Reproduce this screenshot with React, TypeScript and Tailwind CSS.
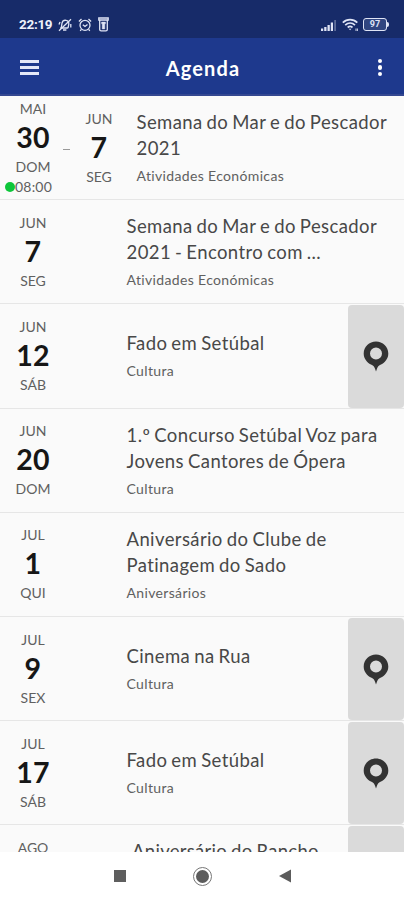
import React, { FC } from "react";

interface EventDate {
  month: string;
  day?: string;
  weekday?: string;
  time?: string;
}

interface AgendaEvent {
  start: EventDate;
  end?: EventDate;
  lines: string[];
  category: string;
  hasLocation?: boolean;
}

const events: AgendaEvent[] = [
  {
    start: { month: "MAI", day: "30", weekday: "DOM", time: "08:00" },
    end: { month: "JUN", day: "7", weekday: "SEG" },
    lines: ["Semana do Mar e do Pescador", "2021"],
    category: "Atividades Económicas",
  },
  {
    start: { month: "JUN", day: "7", weekday: "SEG" },
    lines: ["Semana do Mar e do Pescador", "2021 - Encontro com ..."],
    category: "Atividades Económicas",
  },
  {
    start: { month: "JUN", day: "12", weekday: "SÁB" },
    lines: ["Fado em Setúbal"],
    category: "Cultura",
    hasLocation: true,
  },
  {
    start: { month: "JUN", day: "20", weekday: "DOM" },
    lines: ["1.º Concurso Setúbal Voz para", "Jovens Cantores de Ópera"],
    category: "Cultura",
  },
  {
    start: { month: "JUL", day: "1", weekday: "QUI" },
    lines: ["Aniversário do Clube de", "Patinagem do Sado"],
    category: "Aniversários",
  },
  {
    start: { month: "JUL", day: "9", weekday: "SEX" },
    lines: ["Cinema na Rua"],
    category: "Cultura",
    hasLocation: true,
  },
  {
    start: { month: "JUL", day: "17", weekday: "SÁB" },
    lines: ["Fado em Setúbal"],
    category: "Cultura",
    hasLocation: true,
  },
];

const StatusBar: FC = () => (
  <div className="flex h-[38px] shrink-0 items-center justify-between bg-[#172b69] pt-[11px] pr-[15px] pl-[19px] text-[#dfe4f5]">
    <div className="flex items-center gap-[6px]">
      <span className="w-[33px] font-['Roboto',sans-serif] text-[13.5px] leading-none font-bold tracking-[-0.3px] text-[#eef1fb]">
        22:19
      </span>
      {/* Muted bell */}
      <svg width="14" height="14" viewBox="0 0 14 14" fill="none" stroke="currentColor" strokeWidth="1.3">
        <path d="M2.2 10h7.6M3.3 9.8 4 5.2C4.5 3 6 2 8 2.3s3 1.8 2.8 3.8L10 10.2M5 12h3.4" />
        <path d="M1 12.8 13 1.2M1 6.5 2 4M12.8 6v3.5" />
      </svg>
      {/* Alarm clock */}
      <svg width="14" height="14" viewBox="0 0 14 14" fill="none" stroke="currentColor" strokeWidth="1.3">
        <circle cx="7" cy="7.3" r="5" />
        <path d="M.9 3.4 3.5 1M13.1 3.4 10.5 1M4.8 6.7 7 8.5l2.5-2M3.4 11.3l-1.2 1.6M10.6 11.3l1.2 1.6" />
      </svg>
      {/* Bin */}
      <svg width="11" height="15" viewBox="0 0 11 15" fill="none" stroke="currentColor">
        <path d="M.8 1h9.4v2H.8zM1.7 3v9.4q0 1.4 1.4 1.4h4.8q1.4 0 1.4-1.4V3" strokeWidth="1.3" />
        <path d="M3.5 5h4v1.8h-.7V12H4.2V6.8h-.7z" fill="currentColor" strokeWidth=".4" />
      </svg>
    </div>
    <div className="flex items-center">
      <svg width="16" height="12" viewBox="0 0 16 12" fill="currentColor">
        <path d="M0 9.5h2.2V12H0zM3.2 8h2.3v4H3.2zM6.5 6h2.3v6H6.5zM9.8 3.5H12V12H9.8z" />
        <path d="M13.2 1H15v11h-1.800z" opacity=".35" />
      </svg>
      <svg className="ml-[5px]" width="18" height="14" viewBox="0 0 18 14" fill="none" stroke="currentColor" strokeWidth="1.7">
        <path d="M.8 4.6c4.2-4.1 10.3-4.1 14.500 0M3.200 7.200c2.900-2.700 6.900-2.700 9.800 0M5.700 9.500c1.500-1.300 3.300-1.300 4.800 0" />
        <path d="m6.8 10.8 1.3 1.500 1.300-1.500z" fill="currentColor" stroke="none" />
        <path d="M14 10.500v2.500M15.400 10.500v2.500" strokeWidth=".9" />
      </svg>
      <span className="ml-[3px] flex h-[13px] w-[24px] items-center justify-center rounded-[3px] border-[1.5px] border-current bg-[#304580] font-['Roboto',sans-serif] text-[9px] leading-none font-bold">
        97
      </span>
      <span className="h-[5px] w-[2px] rounded-r-sm bg-current" />
    </div>
  </div>
);

const AppBar: FC = () => (
  <header className="flex h-[58px] shrink-0 items-center justify-between border-b-2 border-[#344891] bg-[#1e398d] pt-[3px] pr-[20px] pl-[20px] text-white">
    <button aria-label="Menu" className="flex w-[19px] flex-col gap-[3px]">
      <span className="h-[3px] w-full bg-[#e4e8f8]" />
      <span className="h-[3px] w-full bg-[#e4e8f8]" />
      <span className="h-[3px] w-full bg-[#e4e8f8]" />
    </button>
    <h1 className="-ml-[9px] text-[20px] leading-6 font-bold tracking-[1.1px]">Agenda</h1>
    <button aria-label="Opções" className="flex w-[8px] flex-col items-center gap-[2px]">
      <span className="size-[4.5px] rounded-full bg-white" />
      <span className="size-[4.5px] rounded-full bg-white" />
      <span className="size-[4.5px] rounded-full bg-white" />
    </button>
  </header>
);

const DateBlock: FC<{ date: EventDate }> = ({ date }) => (
  <div className="flex w-[66px] shrink-0 flex-col items-center text-[14px] leading-5 text-[#606060]">
    <span>{date.month}</span>
    {date.day && (
      <span className="-mt-px mb-px text-[28.5px] leading-[38px] font-bold tracking-[0.3px] text-[#161616]">
        {date.day}
      </span>
    )}
    {date.weekday && <span>{date.weekday}</span>}
    {date.time && (
      <span className="flex items-center pr-[9px]">
        <span className="size-[10px] rounded-full bg-[#0dc63a]" />
        <span className="tracking-[0.2px]">{date.time}</span>
      </span>
    )}
  </div>
);

const MapPin: FC = () => (
  <svg width="26" height="31" viewBox="0 0 26 31" fill="#333">
    <path
      fillRule="evenodd"
      d="M13 .5C6.2.5.7 5.800.7 12.500c0 5.300 3.400 9.300 7.800 11.200 2 .9 3.200 2.300 3.800 4.900L13 30.500l.7-1.900c.6-2.600 1.800-4 3.800-4.900 4.400-1.900 7.800-5.900 7.800-11.200C25.300 5.800 19.800.5 13 .5zM13 6.500a6 6 0 1 1 0 12 6 6 0 0 1 0-12z"
    />
  </svg>
);

const EventRow: FC<{ event: AgendaEvent }> = ({ event }) => (
  <li className="flex h-[104.2px] shrink-0 border-b-[1.5px] border-[#e6e6e6]">
    <div className="flex min-w-0 flex-1 items-center">
      <DateBlock date={event.start} />
      {event.end ? (
        <div className="flex w-[70.5px] shrink-0 items-center">
          <span className="mt-[3px] -ml-[3px] h-px w-[7px] shrink-0 bg-[#999]" />
          <div className="-ml-[4px]">
            <DateBlock date={event.end} />
          </div>
        </div>
      ) : (
        <div className="w-[60.5px] shrink-0" />
      )}
      <div className="whitespace-nowrap">
        <h2 className="text-[18.5px] leading-[26px] tracking-[0.4px] [word-spacing:-1.1px] text-[#484848]">
          {event.lines.map((line) => (
            <span key={line} className="block">
              {line}
            </span>
          ))}
        </h2>
        <p className="mt-[5px] text-[14px] leading-5 tracking-[0.35px] text-[#606060]">{event.category}</p>
      </div>
    </div>
    {event.hasLocation && (
      <button
        aria-label="Ver no mapa"
        className="mt-px flex w-[56px] shrink-0 items-center justify-center rounded-[4px] bg-[#dadada]"
      >
        <MapPin />
      </button>
    )}
  </li>
);

// Row scrolled partly below the edge of the list
const PartialRow: FC = () => (
  <li className="flex min-h-0 flex-1 overflow-hidden">
    <div className="flex min-w-0 flex-1 items-start pt-[13px]">
      <DateBlock date={{ month: "AGO" }} />
      <h2 className="ml-[66px] text-[18.5px] leading-[26px] tracking-[0.3px] [word-spacing:-1.1px] whitespace-nowrap text-[#484848]">
        Aniversário do Rancho
      </h2>
    </div>
    <div className="mt-px w-[56px] shrink-0 rounded-t-[4px] bg-[#dadada]" />
  </li>
);

const NavigationBar: FC = () => (
  <nav className="flex h-[48px] shrink-0 items-center justify-center bg-white pl-px">
    <span className="size-[12px] bg-[#5e5e5e]" />
    <span className="ml-[67px] flex size-[19px] items-center justify-center rounded-full border-[1.5px] border-[#777]">
      <span className="size-[13px] rounded-full bg-[#5c5c5c]" />
    </span>
    <svg className="ml-[67px]" width="13" height="14" viewBox="0 0 13 14" fill="#5c5c5c">
      <path d="M0 7 12 .5v13z" />
    </svg>
  </nav>
);

const App: FC = () => {
  return (
    <div className="flex h-[900px] w-[404px] flex-col overflow-hidden bg-[#fafafa] font-['Lato',sans-serif]">
      <StatusBar />
      <AppBar />
      <ul className="flex min-h-0 flex-1 flex-col overflow-hidden">
        {events.map((event, index) => (
          <EventRow key={index} event={event} />
        ))}
        <PartialRow />
      </ul>
      <NavigationBar />
    </div>
  );
};

export default App;
